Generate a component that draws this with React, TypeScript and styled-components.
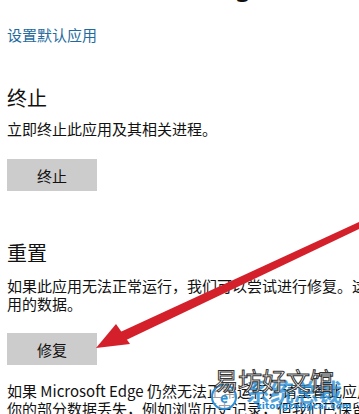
import React from "react";
import styled, { createGlobalStyle } from "styled-components";

const Global = createGlobalStyle`
  html, body { margin: 0; padding: 0; background: #ffffff; overflow: hidden; }
  body { font-family: "Noto Sans CJK SC", "Noto Sans", sans-serif; color: #000; }
`;

const Page = styled.div`
  position: relative;
  width: 359px;
  height: 414px;
  overflow: hidden;
  background: #fff;
`;

const Content = styled.div`
  width: 440px;
  padding-left: 7px;
  display: flex;
  flex-direction: column;
  align-items: flex-start;
`;

const Title = styled.div`
  font-family: "Noto Sans", "Noto Sans CJK SC", sans-serif;
  font-size: 28px;
  line-height: 34px;
  margin-top: -33px;
  color: #111;
  white-space: nowrap;
`;

const Link = styled.div`
  font-size: 15px;
  line-height: 18px;
  color: #1f6b9e;
  margin-top: 25px;
`;

const Heading = styled.div<{ $gap: number }>`
  font-size: 20px;
  line-height: 26px;
  margin-top: ${(p) => p.$gap}px;
  color: #111;
`;

const Text = styled.div<{ $gap: number }>`
  font-size: 15px;
  line-height: 18px;
  margin-top: ${(p) => p.$gap}px;
  color: #111;
`;

const Button = styled.div<{ $gap: number }>`
  margin-top: ${(p) => p.$gap}px;
  width: 90px;
  height: 32px;
  background: #cccccc;
  display: flex;
  align-items: center;
  justify-content: center;
  font-size: 15px;
  color: #111;
`;

const Overlay = styled.svg`
  position: absolute;
  left: 0;
  top: 0;
  pointer-events: none;
`;

const Watermark = styled.div`
  position: absolute;
  left: 208px;
  top: 364px;
  width: 151px;
  height: 50px;
`;

const WmTitle = styled.div`
  position: absolute;
  left: 6px;
  top: 0;
  font-size: 24px;
  line-height: 32px;
  color: #ffffff;
  -webkit-text-stroke: 1px #333;
  white-space: nowrap;
`;

const WmBrand = styled.div`
  position: absolute;
  left: 38px;
  top: 14px;
  font-size: 24px;
  line-height: 26px;
  font-weight: 700;
  color: #2a8fd6;
  opacity: 0.8;
  white-space: nowrap;
`;

const WmUrl = styled.div`
  position: absolute;
  left: 48px;
  top: 37px;
  font-family: "DejaVu Sans", sans-serif;
  font-size: 9px;
  font-weight: 700;
  color: #2a8fd6;
  white-space: nowrap;
`;

const WmLogo = styled.div`
  position: absolute;
  left: 3px;
  top: 20px;
  width: 22px;
  height: 22px;
  border: 2px solid #2a8fd6;
  border-radius: 50%;
  background: rgba(255,255,255,0.6);
  color: #2a8fd6;
  font-size: 14px;
  font-weight: 700;
  display: flex;
  align-items: center;
  justify-content: center;
`;

export default function App() {
  return (
    <Page>
      <Global />
      <Content>
        <Title>应用 Microsoft Edge</Title>
        <Link>设置默认应用</Link>
        <Heading $gap={41}>终止</Heading>
        <Text $gap={9}>立即终止此应用及其相关进程。</Text>
        <Button $gap={21}>终止</Button>
        <Heading $gap={49}>重置</Heading>
        <Text $gap={11}>如果此应用无法正常运行，我们可以尝试进行修复。这不会影响应用的数据。</Text>
        <Button $gap={20}>修复</Button>
        <Text $gap={17}>如果 Microsoft Edge 仍然无法正常运行，请重置此应用。这会导致你的部分数据丢失，例如浏览历史记录，但我们已保留你的收藏夹。</Text>
      </Content>
      <Overlay width="359" height="414" viewBox="0 0 359 414">
        <polygon points="359,222 359,229 122,342 116,334" fill="#d4202b" />
        <polygon points="96,348 116,324 130,344" fill="#d4202b" />
      </Overlay>
      <Watermark>
        <WmBrand>系统总裁</WmBrand>
        <WmUrl>xitongzongcai.com</WmUrl>
        <WmLogo>e</WmLogo>
        <WmTitle>易坊好文馆</WmTitle>
      </Watermark>
    </Page>
  );
}
